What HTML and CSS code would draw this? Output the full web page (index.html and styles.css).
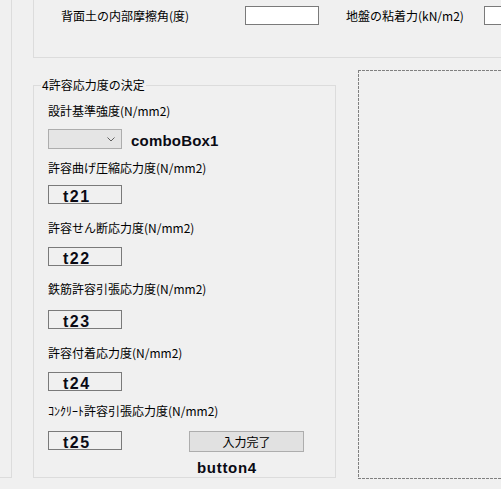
FILE: index.html
```html
<!DOCTYPE html>
<html lang="ja">
<head>
<meta charset="utf-8">
<link rel="stylesheet" href="styles.css">
</head>
<body>
<div class="left-panel"></div>
<div class="main">
  <div class="top-group">
    <div class="top-row">
      <span class="lbl lbl-friction">背面土の内部摩擦角(度)</span>
      <span class="input"></span>
      <span class="lbl lbl-cohesion">地盤の粘着力(kN/m2)</span>
      <span class="input input-cut"></span>
    </div>
  </div>
  <div class="lower">
    <fieldset class="group4">
      <legend>4許容応力度の決定</legend>
      <div class="lbl l1">設計基準強度(N/mm2)</div>
      <div class="combo-row">
        <div class="combo">
          <svg class="chev" width="8" height="5" viewBox="0 0 8 5"><polyline points="0.5,0.5 4,4 7.5,0.5" fill="none" stroke="#606060" stroke-width="1"/></svg>
        </div>
        <span class="bold-name combo-name">comboBox1</span>
      </div>
      <div class="lbl l2">許容曲げ圧縮応力度(N/mm2)</div>
      <div class="tbox b1">t21</div>
      <div class="lbl l3">許容せん断応力度(N/mm2)</div>
      <div class="tbox b2">t22</div>
      <div class="lbl l4">鉄筋許容引張応力度(N/mm2)</div>
      <div class="tbox b3">t23</div>
      <div class="lbl l5">許容付着応力度(N/mm2)</div>
      <div class="tbox b4">t24</div>
      <div class="lbl l6">ｺﾝｸﾘｰﾄ許容引張応力度(N/mm2)</div>
      <div class="last-row">
        <div class="tbox">t25</div>
        <div class="btn">入力完了</div>
      </div>
      <div class="bold-name btn-name">button4</div>
    </fieldset>
    <div class="canvas"></div>
  </div>
</div>
</body>
</html>
```

FILE: styles.css
```css
html, body {
  margin: 0;
  padding: 0;
}
body {
  width: 501px;
  height: 489px;
  overflow: hidden;
  background: #f0f0f0;
  display: flex;
  align-items: flex-start;
  font-family: "Noto Sans CJK JP", "Liberation Sans", sans-serif;
  font-size: 12px;
  color: #000;
}
.left-panel {
  flex: none;
  width: 11px;
  height: 477px;
  border-right: 1px solid #dcdcdc;
  border-bottom: 1px solid #dcdcdc;
}
.main {
  flex: none;
  margin-left: 21px;
  width: 468px;
  display: flex;
  flex-direction: column;
}
.top-group {
  box-sizing: border-box;
  height: 58px;
  border-left: 1px solid #dcdcdc;
  border-bottom: 1px solid #dcdcdc;
  padding-top: 6px;
  padding-left: 27px;
}
.top-row {
  display: flex;
  align-items: center;
}
.lbl {
  line-height: 14px;
  height: 14px;
  white-space: nowrap;
}
.lbl-friction {
  width: 184px;
}
.lbl-cohesion {
  width: 138px;
  margin-left: 27px;
}
.input {
  box-sizing: border-box;
  flex: none;
  width: 74px;
  height: 19px;
  background: #fff;
  border: 1px solid #7a7a7a;
}
.input-cut {
  flex: 1;
  width: auto;
  border-right: none;
}
.lower {
  display: flex;
  align-items: flex-start;
}
.group4 {
  box-sizing: border-box;
  flex: none;
  margin: 20px 0 0 0;
  width: 303px;
  height: 400px;
  border: 1px solid #dcdcdc;
  padding: 0 14px;
  min-width: 0;
}
.group4 legend {
  padding: 0 1px;
  margin-left: -7px;
  line-height: 14px;
  font-size: 12px;
}
.l1 { margin-top: 12px; }
.combo-row {
  margin-top: 11px;
  display: flex;
  align-items: center;
}
.combo {
  box-sizing: border-box;
  width: 74px;
  height: 20px;
  background: #e5e5e5;
  border: 1px solid #adadad;
  display: flex;
  align-items: center;
  justify-content: flex-end;
  padding-right: 6px;
}
.chev {
  display: block;
}
.bold-name {
  font-family: "Liberation Sans", Arial, sans-serif;
  font-weight: bold;
  font-size: 15px;
  line-height: 16px;
  color: #0a0a14;
}
.combo-name {
  margin-left: 9px;
  letter-spacing: 0.2px;
  margin-top: 3px;
}
.l2 { margin-top: 12px; }
.tbox {
  box-sizing: border-box;
  width: 74px;
  height: 19px;
  border: 1px solid #7a7a7a;
  padding: 2px 0 0 14px;
  overflow: hidden;
  font-family: "Liberation Sans", Arial, sans-serif;
  font-weight: bold;
  font-size: 16px;
  line-height: 17px;
  letter-spacing: 1.5px;
  color: #0a0a14;
}
.b1 { margin-top: 10px; }
.l3 { margin-top: 17px; }
.b2 { margin-top: 12px; }
.l4 { margin-top: 16px; }
.b3 { margin-top: 14px; }
.l5 { margin-top: 17px; }
.b4 { margin-top: 12px; }
.l6 { margin-top: 13px; }
.last-row {
  margin-top: 13px;
  display: flex;
  align-items: flex-start;
}
.btn {
  box-sizing: border-box;
  margin-left: 67px;
  width: 115px;
  height: 21px;
  background: #e1e1e1;
  border: 1px solid #adadad;
  text-align: center;
  line-height: 19px;
  font-size: 12px;
}
.btn-name {
  margin-top: 8px;
  margin-left: 149px;
  letter-spacing: 0.7px;
}
.canvas {
  box-sizing: border-box;
  flex: 1;
  margin-top: 12px;
  margin-left: 22px;
  height: 409px;
  background:
    repeating-linear-gradient(to right, #808080 0 3px, transparent 3px 4px) top left / 100% 1px no-repeat,
    repeating-linear-gradient(to right, #808080 0 3px, transparent 3px 4px) bottom left / 100% 1px no-repeat,
    repeating-linear-gradient(to bottom, #808080 0 3px, transparent 3px 4px) top left / 1px 100% no-repeat;
}
```
